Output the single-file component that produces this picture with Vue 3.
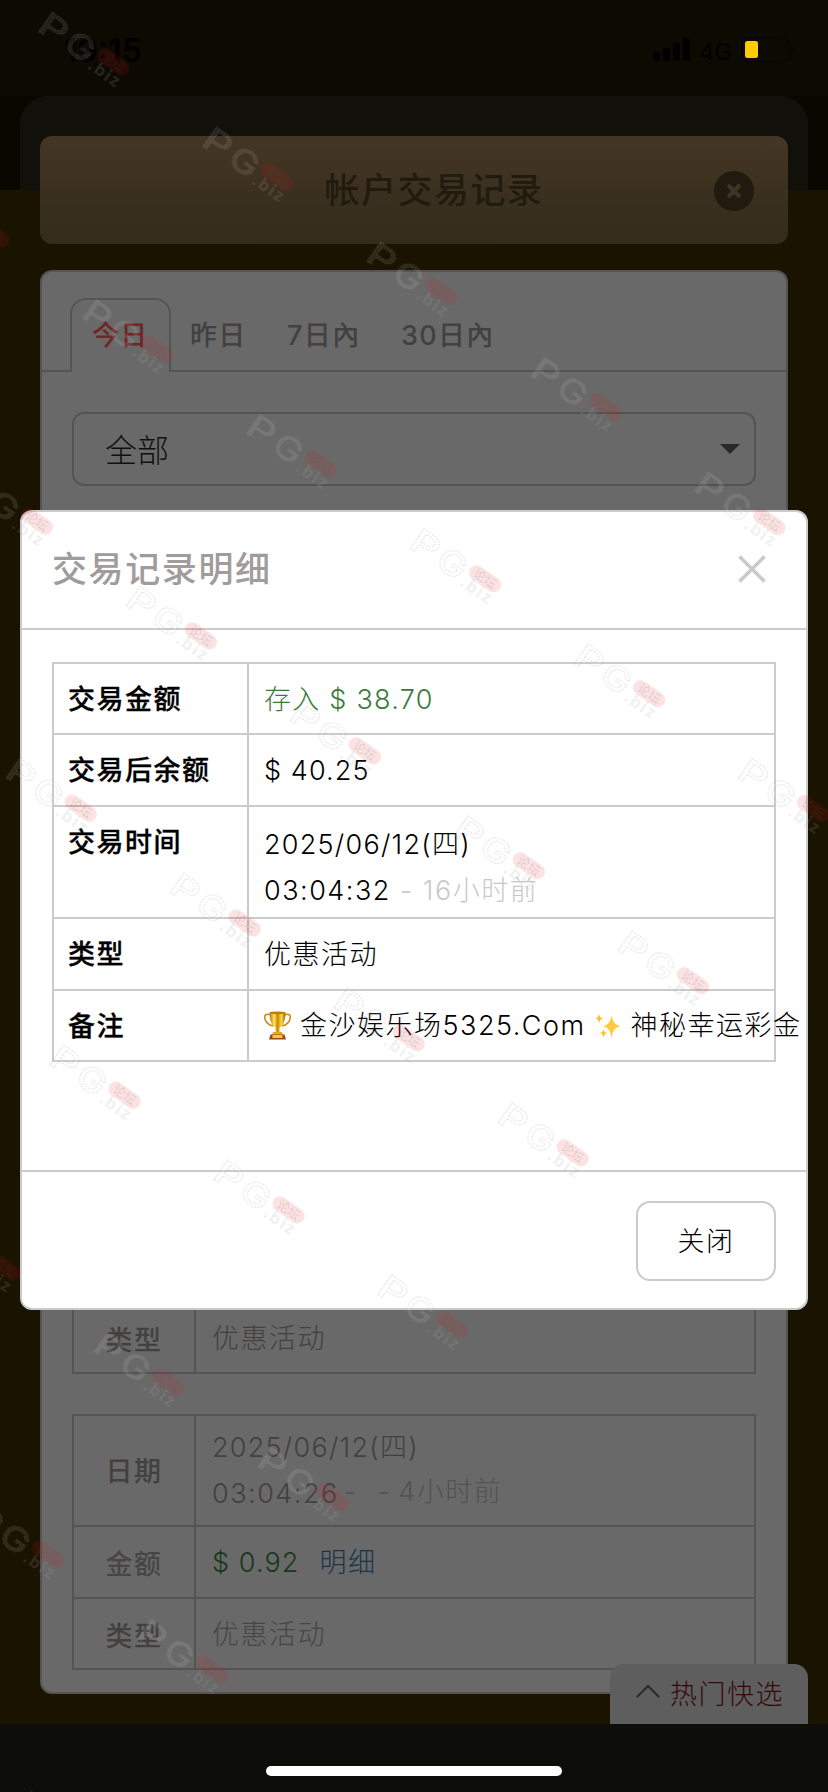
<script setup>
const tabs = ['今日', '昨日', '7日內', '30日內']

// Diagonal bands of watermark stamps, from the top left corner downwards
const stamps = []
for (let j = 0; j <= 7; j++) {
  for (let i = -2; i <= Math.min(4, 5 - j); i++) {
    const x = 113.3 + i * 164 + j * 43.8
    const y = 62 + i * 114.9 + j * 287
    if (x > -30 && x < 870 && y > -20 && y < 1850) stamps.push({ x, y })
  }
}
</script>

<template>
  <div class="screen">
    <header class="status">
      <span class="time">19:15</span>
      <div class="signals">
        <svg class="bars" width="38" height="24" viewBox="0 0 38 24">
          <rect x="0" y="14" width="7" height="9" rx="2" />
          <rect x="10" y="10" width="7" height="13" rx="2" />
          <rect x="20" y="5" width="7" height="18" rx="2" />
          <rect x="30" y="0" width="7" height="23" rx="2" />
        </svg>
        <span class="net">4G</span>
        <svg class="battery" width="54" height="26" viewBox="0 0 54 26">
          <rect x="1" y="1" width="47" height="24" rx="7" fill="none" stroke="#080700" stroke-width="2" />
          <path d="M50 9q3 1 3 4t-3 4z" fill="#080700" />
          <rect x="4" y="4" width="13" height="17" rx="2.5" fill="#ffcc00" />
        </svg>
      </div>
    </header>

    <div class="hero"><div class="sheet"></div></div>

    <div class="titlebar">
      <h1>帐户交易记录</h1>
      <svg class="close" width="40" height="40" viewBox="0 0 40 40">
        <circle cx="20" cy="20" r="20" fill="#211b0f" />
        <path d="M15.3 15.3l9.4 9.4M24.7 15.3l-9.4 9.4" stroke="#3d3322" stroke-width="4.4" stroke-linecap="round" />
      </svg>
    </div>

    <main class="card">
      <nav class="tabs">
        <span v-for="(t, i) in tabs" :key="t" class="tab" :class="{ active: i === 0 }">{{ t }}</span>
      </nav>
      <div class="select">
        <span>全部</span>
        <svg width="20" height="10" viewBox="0 0 20 10"><path d="M0 0h20L10 10z" fill="#292929" /></svg>
      </div>

      <div class="record first">
        <div class="row"><b>类型</b><p>优惠活动</p></div>
      </div>
      <div class="record">
        <div class="row date">
          <b>日期</b>
          <p><span class="day">2025/06/12(四)</span><br />03:04:26<span class="ago"><i>-</i><i>-</i>4小时前</span></p>
        </div>
        <div class="row"><b class="pale">金额</b><p class="money">$ 0.92<span class="link">明细</span></p></div>
        <div class="row last"><b>类型</b><p class="pale">优惠活动</p></div>
      </div>
    </main>

    <footer class="bottom"><div class="home"></div></footer>

    <div class="quick">
      <svg width="24" height="14" viewBox="0 0 24 14"><path d="M1.5 12.500L12 2l10.500 10.500" fill="none" stroke="#2d2d2d" stroke-width="2.200" stroke-linecap="round" /></svg>
      <span>热门快选</span>
    </div>

    <section class="modal">
      <div class="mhead">
        <h2>交易记录明细</h2>
        <svg width="28" height="28" viewBox="0 0 28 28"><path d="M1.500 1.500l25 25M26.500 1.500l-25 25" stroke="#c9c9c9" stroke-width="3.400" /></svg>
      </div>
      <div class="mbody">
        <dl class="detail">
          <dt>交易金额</dt><dd class="in">存入 $ 38.70</dd>
          <dt>交易后余额</dt><dd class="sum">$ 40.25</dd>
          <dt class="tall">交易时间</dt><dd class="tall"><span class="day">2025/06/12(四)</span><br />03:04:32 <span class="since">- 16小时前</span></dd>
          <dt>类型</dt><dd>优惠活动</dd>
          <dt class="end">备注</dt>
          <dd class="end note">
            <svg width="27" height="29" viewBox="0 0 27 29">
              <defs>
                <linearGradient id="gold" x1="0" x2="1">
                  <stop offset="0" stop-color="#b97b08" /><stop offset=".3" stop-color="#ffe45c" />
                  <stop offset=".5" stop-color="#c58a0c" /><stop offset=".75" stop-color="#ffd83d" />
                  <stop offset="1" stop-color="#9c6205" />
                </linearGradient>
              </defs>
              <path d="M7 4C2 2 0 4 1 8c1 4 4 6 8 7M20 4c5-2 7 0 6 4-1 4-4 6-8 7" fill="none" stroke="#d08a18" stroke-width="1.600" />
              <path d="M5.500 1.500C5.500 10 8 15 11.500 16.500V21h4v-4.500C19 15 21.500 10 21.500 1.500z" fill="url(#gold)" />
              <ellipse cx="13.500" cy="1.800" rx="8" ry="1.400" fill="#b97c10" />
              <path d="M9 21h9l1 3H8z" fill="#e8a621" />
              <path d="M6.500 23.500h14l1.500 5H5z" fill="#9a4a17" />
              <rect x="8.500" y="24" width="10" height="3" fill="#f5c53b" />
            </svg>
            <span>金沙娱乐场5325.Com</span>
            <svg class="spark" width="26" height="26" viewBox="0 0 26 26">
              <path d="M16.500 1.500Q17.500 12 25.500 13.200 17.500 14.500 16.500 25 15.500 14.500 8 13.200 15.500 12 16.500 1.500z" fill="#ffcb3c" />
              <path d="M4 1Q4.600 4.800 8 5.500 4.600 6.200 4 10.500 3.400 6.200.5 5.500 3.400 4.800 4 1zM8.500 16Q9 19.500 12 20 9 20.500 8.500 25 8 20.500 5 20 8 19.500 8.500 16z" fill="#fbc02f" />
            </svg>
            <span>神秘幸运彩金</span>
          </dd>
        </dl>
      </div>
      <div class="mfoot"><button>关闭</button></div>
    </section>

    <svg class="marks" width="828" height="1792" viewBox="0 0 828 1792">
      <g v-for="(s, k) in stamps" :key="k" :transform="`translate(${s.x} ${s.y}) rotate(35)`">
        <g class="brand">
          <text x="-82" y="18" textLength="28" lengthAdjust="spacingAndGlyphs">P</text>
          <text x="-50" y="18" textLength="29" lengthAdjust="spacingAndGlyphs">G</text>
        </g>
        <rect x="-18" y="-7.500" width="36" height="15" rx="7.500" fill="#f01418" fill-opacity=".12" />
        <text class="forum" x="-12.500" y="4.500">论坛</text>
        <text class="biz" x="-18" y="20" textLength="34">.biz</text>
      </g>
    </svg>
  </div>
</template>

<style>
body { margin: 0; background: #1a1300; }
</style>

<style scoped>
.screen {
  position: relative;
  width: 828px;
  height: 1792px;
  overflow: hidden;
  display: flex;
  flex-direction: column;
  background: #1a1300;
  font-family: Inter, "Noto Sans CJK SC", sans-serif;
  font-size: 27px;
  letter-spacing: 1.5px;
  color: #434040;
}
.screen * { box-sizing: border-box; }
h1, h2, p, dl, dd { margin: 0; }

.status {
  flex: none;
  height: 96px;
  padding: 4px 33px 0 64px;
  display: flex;
  align-items: center;
  justify-content: space-between;
  background: #0d0a02;
  color: #000;
}
.time { font-size: 32px; font-weight: 600; letter-spacing: 0; }
.signals { display: flex; align-items: center; }
.net { margin: 2px 9px 0 8px; font-size: 23.500px; letter-spacing: 0; }

.hero { flex: none; height: 94px; padding: 0 20px; background: #080800; }
.sheet { height: 94px; border-radius: 28px 28px 0 0; background: #11100b; }

.titlebar {
  flex: none;
  height: 108px;
  margin: -54px 40px 0;
  padding: 2px 34px 0 0;
  display: grid;
  grid-template-columns: 114px 1fr 40px;
  align-items: center;
  border-radius: 12px;
  background: linear-gradient(#443624, #332b1b);
}
h1 { grid-column: 2; text-align: center; font-size: 35px; line-height: 50px; margin-top: -2px; font-weight: 500; letter-spacing: 1.500px; color: #211b0f; }

.card {
  flex: none;
  height: 1424px;
  margin: 26px 40px 0;
  padding-bottom: 22px;
  display: flex;
  flex-direction: column;
  border: 2px solid #545454;
  border-radius: 12px;
  background: #696969;
}
.tabs { display: flex; height: 100px; padding: 26px 28px 0; border-bottom: 2px solid #545454; font-weight: 500; }
.tab { height: 74px; padding: 0 20.500px 0 20px; line-height: 76px; white-space: nowrap; letter-spacing: 1.300px; }
.active {
  width: 101px;
  padding: 0 20px;
  margin-right: -1px;
  line-height: 72px;
  border: 2px solid #545454;
  border-bottom: 0;
  border-radius: 16px 16px 0 0;
  background: #696969;
  color: #6e2626;
}
.select {
  flex: none;
  height: 74px;
  margin: 40px 30px 0;
  padding: 0 14px 2px 31px;
  display: flex;
  align-items: center;
  justify-content: space-between;
  border: 2px solid #545454;
  border-radius: 12px;
  font-size: 32px;
  letter-spacing: 0;
  color: #101010;
  font-weight: 300;
}
.select svg { margin-top: 2px; }

.record { margin: 40px 30px 0; border: 2px solid #545454; font-weight: 300; }
.record.first { margin-top: auto; }
.row { display: grid; grid-template-columns: 122px 1fr; height: 72px; border-bottom: 2px solid #545454; }
.row.date { height: 111px; }
.row.last, .first .row { height: 69px; border-bottom: 0; }
.row b { display: flex; align-items: center; justify-content: center; border-right: 2px solid #545454; font-weight: 500; }
.row.date b { padding-bottom: 2px; }
.row p { padding-left: 16px; line-height: 71px; }
.row.date p { padding-top: 9px; line-height: 46px; }
.day { letter-spacing: 1.250px; }
.pale { color: #474545; }
.ago { color: #545252; position: relative; top: -2px; }
.ago i { font-style: normal; margin: 0 7px 0 5px; }
.ago i + i { margin-left: 13px; }
.row .money { color: #18371a; letter-spacing: 1.100px; }
.link { margin-left: 20px; letter-spacing: 1.500px; color: #18344a; }

.bottom { flex: none; height: 68px; margin-top: auto; padding-top: 42px; background: #0d0d0a; }
.home { width: 296px; height: 10px; margin: 0 auto; border-radius: 5px; background: #fff; }

.quick {
  position: absolute;
  left: 610px;
  top: 1664px;
  width: 198px;
  height: 60px;
  padding: 0 0 3px 26px;
  display: flex;
  align-items: center;
  gap: 10px;
  border-radius: 14px 14px 0 0;
  background: #5e5e5e;
  color: #330b0b;
  font-weight: 300;
}
.quick svg { margin-top: -3px; }

.modal {
  position: absolute;
  left: 20px;
  top: 510px;
  width: 788px;
  height: 800px;
  display: flex;
  flex-direction: column;
  border: 2px solid #cbcbcb;
  border-radius: 12px;
  background: #fff;
  color: #000;
}
.mhead { display: flex; align-items: center; justify-content: space-between; height: 118px; padding: 0 40px 2px 30px; border-bottom: 2px solid #cbcbcb; }
h2 { font-size: 35px; line-height: 50px; font-weight: 500; letter-spacing: 1.600px; color: #a19c9c; }
.mbody { height: 540px; padding: 32px 30px 0; }
.detail {
  display: grid;
  grid-template-columns: 195px minmax(0, 1fr);
  grid-template-rows: 71px 72px 112px 72px 69px;
  border: 2px solid #cbcbcb;
}
dt { padding-left: 14px; line-height: 72px; font-weight: 500; -webkit-text-stroke: .3px #000; border-right: 2px solid #cbcbcb; border-bottom: 2px solid #cbcbcb; white-space: nowrap; }
dd { padding-left: 15px; line-height: 72px; font-weight: 300; border-bottom: 2px solid #cbcbcb; white-space: nowrap; }
dd.tall { padding-top: 15px; line-height: 46px; }
dt.end, dd.end { border-bottom: 0; }
.in { color: #3b7a3b; letter-spacing: 1.250px; }
.sum { letter-spacing: 1.100px; }
.since { color: #c9c9c9; }
.note { display: flex; align-items: center; }
.note svg { flex: none; margin-right: 9px; }
.note .spark { margin-left: 9px; margin-right: 10px; }
.mfoot { flex: 1; display: flex; justify-content: flex-end; align-items: flex-start; padding: 29px 30px 0; border-top: 2px solid #cbcbcb; }
button { width: 140px; height: 80px; padding: 0 0 3px; border: 2px solid #cbcbcb; border-radius: 14px; background: #fff; color: #000; font: inherit; font-weight: 300; letter-spacing: inherit; }

.marks { position: absolute; left: 0; top: 0; pointer-events: none; letter-spacing: 0; }
.brand { font: 500 33px Inter, sans-serif; fill: #fff; fill-opacity: .09; stroke: #8a8a8a; stroke-opacity: .2; stroke-width: 1.300; stroke-dasharray: 1.500 1; }
.forum { font: 400 12.500px "Noto Sans CJK SC", sans-serif; fill: #406050; fill-opacity: .18; }
.biz { font: 700 17px "Open Sans", sans-serif; fill: #aaa; fill-opacity: .18; }
</style>
